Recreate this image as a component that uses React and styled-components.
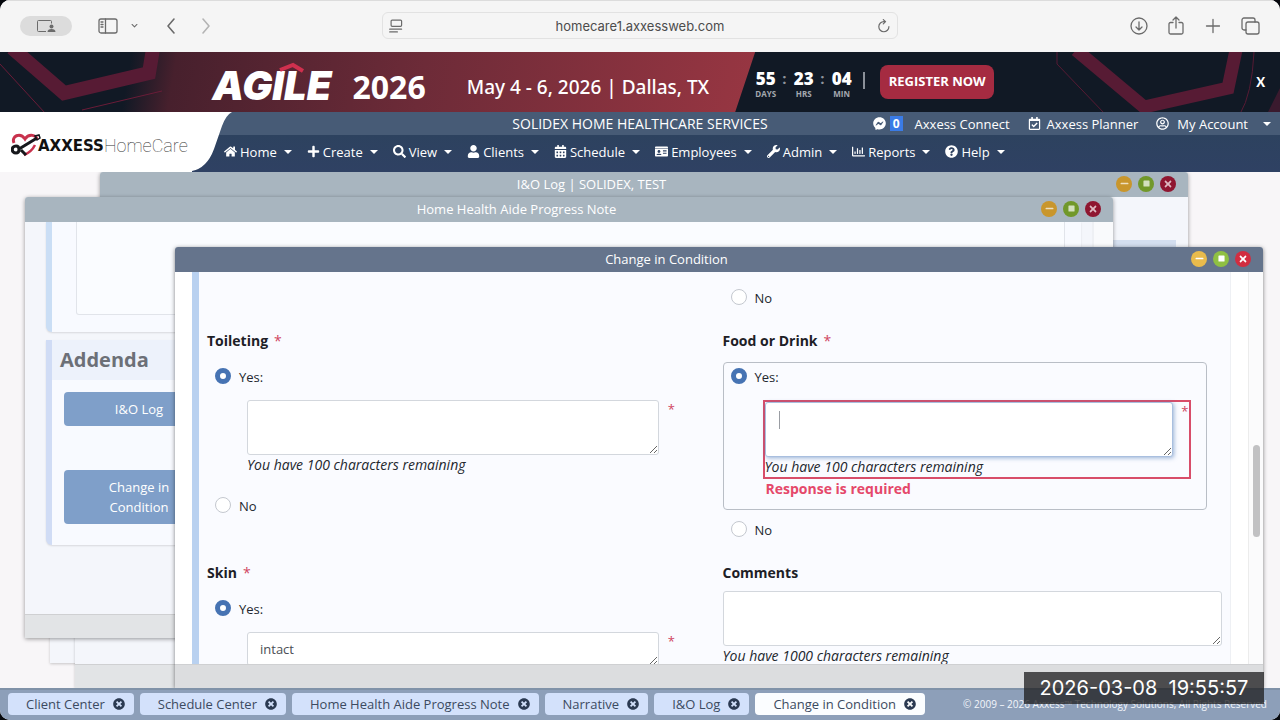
import React from "react";
import styled, { createGlobalStyle, css } from "styled-components";
import {
  FaHome, FaPlus, FaSearch, FaUser, FaCalendarAlt, FaIdCard, FaWrench,
  FaRegChartBar, FaQuestionCircle, FaFacebookMessenger, FaRegCalendarCheck,
  FaRegUserCircle, FaTimesCircle, FaTimes, FaMinus, FaSquare,
} from "react-icons/fa";

const GlobalStyle = createGlobalStyle`
  *, *::before, *::after { box-sizing: border-box; }
  body { margin: 0; background: #06080d; font-family: "Open Sans", "Noto Sans", sans-serif; font-size: 13px; line-height: 20px; color: #23272e; }
  button, input, textarea { font: inherit; margin: 0; }
  button { border: 0; padding: 0; background: none; color: inherit; cursor: pointer; }
  a { color: inherit; text-decoration: none; }
`;

const Page = styled.div`
  display: flex;
  flex-direction: column;
  height: 100vh;
  overflow: hidden;
  border-radius: 10px;
  background: #f8f6f8;
`;

/* Browser toolbar */

const BrowserBar = styled.header`
  flex: none;
  display: grid;
  grid-template-columns: minmax(0, 1fr) minmax(0, 516px) minmax(0, 1fr);
  align-items: center;
  height: 52px;
  padding: 0 20px 2px;
  background: #f5f5f5;
  border-top: 1px solid #dcdcdc;
  color: #6b6b6b;
`;

const ToolGroup = styled.div`
  display: flex;
  align-items: center;
  justify-content: ${(p) => (p.$end ? "flex-end" : "flex-start")};
  gap: ${(p) => p.$gap}px;
`;

const ToolButton = styled.button`
  display: flex;
  color: ${(p) => (p.$faded ? "#b4b4b4" : "#6b6b6b")};
`;

const ProfilePill = styled.button`
  display: flex;
  align-items: center;
  justify-content: center;
  width: 52px;
  height: 20px;
  border-radius: 10px;
  background: #dcdcdc;
`;

const AddressBar = styled.div`
  display: flex;
  align-items: center;
  height: 27px;
  padding: 0 6px;
  border: 1px solid #e2e2e2;
  border-radius: 6px;
`;

const AddressInput = styled.input`
  flex: 1;
  min-width: 0;
  border: 0;
  background: none;
  text-align: center;
  font-family: Inter, sans-serif;
  font-size: 13px;
  color: #4c4c4c;
`;

/* Promotional banner */

const Banner = styled.aside`
  flex: none;
  position: relative;
  display: flex;
  align-items: center;
  height: 60px;
  background: #111925;
  color: #fff;
`;

const Ribbon = styled.div`
  position: relative;
  display: flex;
  align-items: center;
  justify-content: flex-end;
  width: 59%;
  height: 100%;
  padding-right: 46px;
  background: linear-gradient(100deg, #111925 0, #111925 130px, #47202d 175px, #6d2b38 420px, #983642 100%);
  clip-path: polygon(0 0, 100% 0, calc(100% - 20px) 100%, 0 100%);
`;

const BannerArt = styled.svg`
  position: absolute;
  top: 0;
  ${(p) => p.$side}: 0;
`;

const AgileMark = styled.div`
  position: relative;
  margin: 8px 21px 0 0;
  font-family: Inter, sans-serif;
  font-weight: 900;
  font-style: italic;
  font-size: 40px;
  line-height: 44px;
`;

const Roof = styled.svg`
  position: absolute;
  left: 66px;
  top: -3px;
`;

const Year = styled.strong`
  margin: 10px 41px 0 0;
  font-size: 32px;
  line-height: 40px;
  font-weight: 700;
`;

const EventDate = styled.span`
  margin-top: 10px;
  font-family: "Noto Sans", "Open Sans", sans-serif;
  font-size: 19px;
  font-weight: 500;
  line-height: 24px;
  white-space: nowrap;
`;

const Countdown = styled.div`
  display: flex;
  align-items: flex-start;
  gap: 6px;
  margin-top: 4px;
`;

const Unit = styled.div`
  width: 21px;
  text-align: center;
  font-size: 8px;
  line-height: 10px;
  font-weight: 700;
  color: #a4a8af;
`;

const UnitValue = styled.strong`
  display: block;
  font-size: 17px;
  line-height: 20px;
  color: #fff;
`;

const Colon = styled.span`
  width: 5px;
  font-size: 15px;
  font-weight: 700;
  line-height: 18px;
  color: #8f949c;
`;

const Divider = styled.span`
  width: 2px;
  height: 17px;
  margin: 0 15px 4px 11px;
  background: #8b9099;
`;

const RegisterButton = styled.button`
  height: 34px;
  width: 114px;
  padding-bottom: 2px;
  border-radius: 8px;
  background: #a52b41;
  font-size: 13px;
  font-weight: 700;
  color: #fff;
`;

const BannerClose = styled.button`
  position: relative;
  margin: 0 15px 0 auto;
  font-family: Lato, sans-serif;
  font-size: 13px;
  font-weight: 900;
`;

/* Application header */

const AppHeader = styled.header`
  flex: none;
  position: relative;
  color: #fff;
`;

const AgencyStrip = styled.div`
  display: grid;
  grid-template-columns: 1fr auto 1fr;
  align-items: center;
  height: 23px;
  padding: 0 9px;
  background: #475b76;
`;

const AgencyName = styled.span`
  grid-column: 2;
  font-size: 14px;
`;

const AccountLinks = styled.div`
  display: flex;
  align-items: center;
  justify-content: flex-end;
  gap: 18px;
`;

const AccountLink = styled.a`
  display: flex;
  align-items: center;
  gap: ${(p) => p.$gap || 6}px;
  white-space: nowrap;
`;

const CountBadge = styled.span`
  margin: 0 6px 0 -2px;
  padding: 0 3px;
  line-height: 15px;
  background: #3a7be6;
  font-size: 12px;
  font-weight: 700;
`;

const Caret = styled.span`
  border: 4px solid transparent;
  border-top-color: currentColor;
  border-bottom: 0;
  margin-left: ${(p) => p.$space}px;
`;

const MainNav = styled.nav`
  display: flex;
  align-items: center;
  gap: 15px;
  height: 37px;
  padding: 0 16px 4px 224px;
  background: linear-gradient(#2d425f, #2f4163);
`;

const NavLink = styled.a`
  display: flex;
  align-items: center;
  gap: 3px;
  white-space: nowrap;
  svg { height: 13px; width: auto; }
`;

const LogoPanel = styled.a`
  position: absolute;
  left: 0;
  top: 0;
  display: flex;
  height: 60px;
  color: #111;
`;

const LogoFace = styled.span`
  display: flex;
  align-items: center;
  width: 192px;
  padding: 8px 0 0 11px;
  background: #fff;
`;

const LogoEdge = styled.svg`
  display: block;
`;

const LogoBold = styled.span`
  font-family: "DejaVu Sans", sans-serif;
  font-weight: 700;
  font-size: 15px;
  line-height: 20px;
  margin-left: -5px;
`;

const LogoLight = styled.span`
  font-family: Roboto, sans-serif;
  font-weight: 100;
  font-size: 18px;
  line-height: 20px;
  color: #333;
`;

/* Desktop with floating windows */

const Desktop = styled.main`
  flex: 1;
  min-height: 0;
  position: relative;
  overflow: hidden;
`;

const WindowFrame = styled.section`
  position: absolute;
  left: ${(p) => p.$x}px;
  top: ${(p) => p.$y}px;
  width: 85%;
  height: 441px;
  display: flex;
  flex-direction: column;
  background: ${(p) => (p.$active ? "#fff" : "#f4f6fb")};
  box-shadow: 0 1px 4px ${(p) => (p.$active ? "rgba(0,0,0,.5)" : "rgba(0,0,0,.4)")};
  border-radius: 3px 3px 0 0;
  ${(p) => p.$faint && css`box-shadow: 0 1px 3px rgba(0,0,0,.2);`}
`;

const TitleBar = styled.div`
  flex: none;
  display: flex;
  align-items: center;
  height: 25px;
  padding-bottom: 2px;
  border-radius: 3px 3px 0 0;
  background: ${(p) => (p.$active ? "#65748c" : "#a8b5bf")};
`;

const WindowTitle = styled.h2`
  flex: 1;
  margin: 0;
  text-align: center;
  font-size: 13px;
  line-height: 20px;
  font-weight: 400;
  color: #fff;
`;

const WindowControls = styled.div`
  display: flex;
  justify-content: flex-end;
  gap: 6px;
  width: 105px;
  padding-right: 12px;
`;

const ControlDot = styled.button`
  display: flex;
  align-items: center;
  justify-content: center;
  width: 16px;
  height: 16px;
  border-radius: 50%;
  background: ${(p) => p.$color};
  color: ${(p) => (p.$dim ? "rgba(255,255,255,.7)" : "#fff")};
`;

const WindowBody = styled.div`
  flex: 1;
  min-height: 0;
  display: flex;
  overflow: hidden;
`;

const WindowFooter = styled.div`
  flex: none;
  height: 24px;
  border-top: 1px solid #cfd0d2;
  background: ${(p) => (p.$active ? "#dcdddf" : "#e2e4e6")};
`;

const FormArea = styled.div`
  flex: 1;
  min-width: 0;
  padding: 0 17px;
`;

const FormSection = styled.div`
  display: grid;
  grid-template-columns: repeat(2, minmax(0, 1fr));
  row-gap: 23px;
  min-height: 100%;
  padding-top: 16px;
  border-left: 7px solid #b9d1f0;
  border-right: 1px solid #eef0f4;
  background: #fafbff;
`;

const ScrollTrack = styled.div`
  width: 15px;
  padding: 173px 3px 0 4px;
  border-left: 1px solid #ececec;
  background: #fbfbfc;
`;

const ScrollThumb = styled.div`
  height: 92px;
  border-radius: 4px;
  background: #c1c1c3;
`;

const Question = styled.div`
  padding: 0 8px;
`;

const QuestionTitle = styled.h3`
  margin: 0 0 ${(p) => (p.$tight ? 8 : 11)}px;
  font-size: 14px;
  line-height: 20px;
  font-weight: 700;
  color: #1d2026;
`;

const RequiredMark = styled.span`
  margin-left: 6px;
  font-weight: 400;
  color: #d0455f;
`;

const OptionBox = styled.div`
  width: 484px;
  max-width: 100%;
  margin-bottom: 10px;
  padding: 4px 15px 10px 39px;
  border: 1px solid ${(p) => (p.$outlined ? "#b9bec6" : "transparent")};
  border-radius: 4px;
`;

const OptionLabel = styled.label`
  display: flex;
  align-items: center;
  gap: 8px;
  margin-left: ${(p) => (p.$inBox ? -32 : 8)}px;
`;

const Radio = styled.input.attrs({ type: "radio" })`
  appearance: none;
  width: 16px;
  height: 16px;
  margin-bottom: 2px;
  border: 1px solid #c4c8cf;
  border-radius: 50%;
  background: #fff;
  &:checked { border: 5px solid #4673b3; }
`;

const DetailArea = styled.div`
  margin-top: 13px;
  ${(p) => p.$invalid && css`border: 2px solid #d84d69;`}
`;

const DetailRow = styled.div`
  display: flex;
  span { width: 16px; margin: 0; text-align: right; line-height: 18px; }
`;

const TextBox = styled.textarea`
  display: block;
  flex: 1;
  width: 100%;
  min-width: 0;
  height: ${(p) => (p.$short ? 34 : 55)}px;
  padding: 6px 12px;
  border: 1px solid #d3d7dd;
  border-radius: 3px;
  outline: 0;
  background: #fff;
  color: #4a4e55;
  overflow: hidden;
  ${(p) => p.$focused && css`
    border-color: #a9bfdf;
    background: linear-gradient(#9a9da3, #9a9da3) 13px 8px / 1px 18px no-repeat #fff;
    box-shadow: 1px 1px 4px rgba(70, 115, 179, .55);
  `}
`;

const Remaining = styled.em`
  display: block;
  font-size: 14px;
  color: #23272e;
`;

const ErrorText = styled.strong`
  display: block;
  margin-left: 3px;
  font-size: 14px;
  color: #e5486a;
`;

/* Progress note window content */

const NoteArea = styled.div`
  flex: 1;
  min-width: 0;
  padding: 0 11px 0 21px;
`;

const NoteCard = styled.div`
  padding: ${(p) => (p.$plain ? "0 16px 17px 24px" : 0)};
  margin-bottom: 8px;
  border-left: 6px solid ${(p) => (p.$plain ? "#cadef5" : "#d0dcf5")};
  background: #f8faff;
  box-shadow: 0 1px 2px rgba(0, 0, 0, .12);
  border-radius: 0 0 0 6px;
`;

const NoteBox = styled.div`
  height: 93px;
  border: 1px solid #e1e4ea;
  border-top: 0;
  border-radius: 0 0 3px 3px;
  background: #fafcff;
`;

const NoteHeading = styled.h3`
  margin: 0;
  padding: 6px 8px;
  background: #edf2fb;
  font-size: 20px;
  line-height: 28px;
  font-weight: 700;
  color: #6c7077;
`;

const NoteActions = styled.div`
  display: flex;
  flex-direction: column;
  gap: 44px;
  padding: 12px 12px 21px;
`;

const NoteButton = styled.button`
  width: 150px;
  padding: 7px 36px;
  border-radius: 4px;
  background: #7f9fc9;
  color: #fff;
`;

const NoteScroll = styled.div`
  width: 21px;
  border-left: 2px solid #eef0f4;
  background: #f9fafc;
`;

const LogArea = styled.div`
  flex: 1;
  margin: 43px 12px 0;
  height: 40px;
  background: #d3deef;
`;

/* Task bar */

const TaskBar = styled.footer`
  flex: none;
  position: relative;
  display: flex;
  align-items: center;
  gap: 6px;
  height: 32px;
  padding: 0 13px 2px 8px;
  background: #8d9fb9;
  border-top: 2px solid #8092a8;
`;

const TaskTab = styled.div`
  display: flex;
  align-items: center;
  gap: 8px;
  height: 22px;
  padding: 0 9px 0 18px;
  border-radius: 4px;
  white-space: nowrap;
  background: ${(p) => (p.$active ? "#fbfdff" : "#d3e1fb")};
  color: #3c4a60;
`;

const TabClose = styled.button`
  display: flex;
  color: #2b3a52;
`;

const Copyright = styled.small`
  margin-left: auto;
  font-size: 10px;
  line-height: 12px;
  font-weight: 500;
  color: #f3f6fb;
  white-space: nowrap;
`;

const Timestamp = styled.time`
  position: absolute;
  right: 16px;
  bottom: 16px;
  width: 240px;
  text-align: center;
  background: rgba(30, 30, 32, .76);
  font-family: Inter, sans-serif;
  font-size: 20px;
  line-height: 32px;
  color: #fff;
  white-space: pre;
`;

const navItems = [
  ["Home", FaHome], ["Create", FaPlus], ["View", FaSearch], ["Clients", FaUser],
  ["Schedule", FaCalendarAlt], ["Employees", FaIdCard], ["Admin", FaWrench],
  ["Reports", FaRegChartBar], ["Help", FaQuestionCircle],
];

const tabs = ["Client Center", "Schedule Center", "Home Health Aide Progress Note", "Narrative", "I&O Log", "Change in Condition"];

function LineIcon({ size = 20, width = 1.3, children }) {
  return (
    <svg width={size} height={size} viewBox="0 0 20 20" fill="none" stroke="currentColor" strokeWidth={width} strokeLinecap="round" strokeLinejoin="round" aria-hidden="true">
      {children}
    </svg>
  );
}

function BrowserToolbar() {
  return (
    <BrowserBar>
      <ToolGroup $gap={26}>
        <ProfilePill aria-label="Profile">
          <svg width="20" height="14" viewBox="0 0 20 14" fill="none" stroke="#6b6b6b" aria-hidden="true">
            <path d="M10 12.500H2.500a1 1 0 0 1-1-1v-9a1 1 0 0 1 1-1h12a1 1 0 0 1 1 1v2" />
            <circle cx="15.500" cy="7.500" r="2" fill="#6b6b6b" stroke="none" />
            <path d="M11.500 13c0-2 1.500-3 4-3s4 1 4 3z" fill="#6b6b6b" stroke="none" />
          </svg>
        </ProfilePill>
        <ToolGroup $gap={13}>
          <ToolButton aria-label="Show sidebar">
            <LineIcon><rect x="1" y="3" width="18" height="14" rx="2" /><path d="M7.500 3v14M3 6h2M3 8.500h2M3 11h2" /></LineIcon>
          </ToolButton>
          <ToolButton aria-label="Tab groups"><LineIcon size={7} width={3}><path d="m3 7 7 7 7-7" /></LineIcon></ToolButton>
        </ToolGroup>
        <ToolGroup $gap={15}>
          <ToolButton aria-label="Back"><LineIcon width={1.6}><path d="m10 3-6 7 6 7" /></LineIcon></ToolButton>
          <ToolButton aria-label="Forward" $faded><LineIcon width={1.6}><path d="m4 3 6 7-6 7" /></LineIcon></ToolButton>
        </ToolGroup>
      </ToolGroup>
      <AddressBar>
        <ToolButton aria-label="Reader"><LineIcon size={14} width={1.7}><rect x="3" y="1.500" width="15" height="9" rx="1.500" /><path d="M1 14.500h17M1 18.500h11" /></LineIcon></ToolButton>
        <AddressInput aria-label="Address" defaultValue="homecare1.axxessweb.com" />
        <ToolButton aria-label="Reload"><LineIcon size={14} width={1.7}><path d="M17 11a7.200 7.200 0 1 1-7-7.200h2M9 .8l3.200 3L9 7" /></LineIcon></ToolButton>
      </AddressBar>
      <ToolGroup $end $gap={17}>
        <ToolButton aria-label="Downloads"><LineIcon><circle cx="10" cy="10" r="8" /><path d="M10 6v8M7 11l3 3 3-3" /></LineIcon></ToolButton>
        <ToolButton aria-label="Share"><LineIcon><path d="M7 6.500H4.500a1.500 1.500 0 0 0-1.500 1.500v8.500a1.500 1.500 0 0 0 1.500 1.500h11a1.500 1.500 0 0 0 1.500-1.500V8a1.500 1.500 0 0 0-1.500-1.500H13M10 12V1M7 4l3-3 3 3" /></LineIcon></ToolButton>
        <ToolButton aria-label="New tab"><LineIcon><path d="M10 3.500v13M3.500 10h13" /></LineIcon></ToolButton>
        <ToolButton aria-label="All tabs"><LineIcon><rect x="6" y="6" width="13" height="12" rx="2" /><path d="M6 14H4a2 2 0 0 1-2-2V4a2 2 0 0 1 2-2h9a2 2 0 0 1 2 2v2" /></LineIcon></ToolButton>
      </ToolGroup>
    </BrowserBar>
  );
}

function EventBanner() {
  return (
    <Banner>
      <BannerArt $side="right" width="226" height="60" viewBox="0 0 226 60" fill="none" aria-hidden="true">
        <path d="M22-2 90 55 174 36 182-2" stroke="#571b34" strokeWidth="13" />
        <path d="M3 0v12l48 50M186 62q12-20 14-62" stroke="#571b34" strokeWidth="1" />
        <path d="m214 60 12-24v24z" fill="#3a1a2e" />
      </BannerArt>
      <Ribbon>
        <BannerArt $side="left" width="200" height="60" viewBox="0 0 200 60" fill="none" aria-hidden="true">
          <path d="M12-4 64 41 149 21 153-3" stroke="#571b34" strokeWidth="14" />
          <path d="M0 12 45 61M82 58l80-19" stroke="#6a1c38" strokeWidth="1" />
        </BannerArt>
        <AgileMark>
          AGILE
          <Roof width="28" height="12" viewBox="0 0 28 12" aria-hidden="true">
            <path d="M2 9 15 4 25 10" fill="none" stroke="#cf304e" strokeWidth="4" />
          </Roof>
        </AgileMark>
        <Year>2026</Year>
        <EventDate>May 4 - 6, 2026 | Dallas, TX</EventDate>
      </Ribbon>
      <Countdown>
        <Unit><UnitValue>55</UnitValue>DAYS</Unit>
        <Colon>:</Colon>
        <Unit><UnitValue>23</UnitValue>HRS</Unit>
        <Colon>:</Colon>
        <Unit><UnitValue>04</UnitValue>MIN</Unit>
      </Countdown>
      <Divider />
      <RegisterButton>REGISTER NOW</RegisterButton>
      <BannerClose aria-label="Close banner">X</BannerClose>
    </Banner>
  );
}

function Header() {
  return (
    <AppHeader>
      <AgencyStrip>
        <AgencyName>SOLIDEX HOME HEALTHCARE SERVICES</AgencyName>
        <AccountLinks>
          <AccountLink href="#connect"><FaFacebookMessenger size={13} /><CountBadge>0</CountBadge>Axxess Connect</AccountLink>
          <AccountLink href="#planner"><FaRegCalendarCheck size={13} />Axxess Planner</AccountLink>
          <AccountLink href="#account" $gap={8}><FaRegUserCircle size={13} />My Account<Caret $space={7} /></AccountLink>
        </AccountLinks>
      </AgencyStrip>
      <MainNav>
        {navItems.map(([label, Icon]) => (
          <NavLink href={`#${label.toLowerCase()}`} key={label}><Icon />{label}<Caret $space={4} /></NavLink>
        ))}
      </MainNav>
      <LogoPanel href="#top">
        <LogoFace>
          <svg width="32" height="26" viewBox="0 0 32 26" fill="none" aria-hidden="true">
            <path d="M3 10C0 3 9-1 14 6c4-6 12-4 12 1" stroke="#c8324d" strokeWidth="3" />
            <path d="M13 22c5-2 9-6 11-10" stroke="#c8324d" strokeWidth="2.500" />
            <path d="M8 16 26 5M5 13c-5 0-5 7 0 7 4 0 4-7 0-7M10 17l5 5" stroke="#16181c" strokeWidth="3" />
            <path d="m24 3 4-1 1 3-3 2z" stroke="#16181c" strokeWidth="1.500" />
          </svg>
          <LogoBold>AXXESS</LogoBold>
          <LogoLight>HomeCare</LogoLight>
        </LogoFace>
        <LogoEdge width="40" height="60" viewBox="0 0 40 60" aria-hidden="true">
          <path d="M0 0H40Q34 3 30 14L22 37Q15 56 0 59z" fill="#fff" />
        </LogoEdge>
      </LogoPanel>
    </AppHeader>
  );
}

function AppWindow({ x, y, title, active, faint, bare, children }) {
  return (
    <WindowFrame $x={x} $y={y} $active={active} $faint={faint} aria-label={title}>
      <TitleBar $active={active}>
        <WindowTitle>{title}</WindowTitle>
        <WindowControls>
          <ControlDot aria-label="Minimize" $color={active ? "#e9bb4c" : "#c9962c"} $dim={!active}><FaMinus size={9} /></ControlDot>
          <ControlDot aria-label="Maximize" $color={active ? "#8fc043" : "#71982a"} $dim={!active}><FaSquare size={7} /></ControlDot>
          <ControlDot aria-label="Close" $color={active ? "#d22d40" : "#8f1630"} $dim={!active}><FaTimes size={10} /></ControlDot>
        </WindowControls>
      </TitleBar>
      <WindowBody>{children}</WindowBody>
      {!bare && <WindowFooter $active={active} />}
    </WindowFrame>
  );
}

function YesDetail({ name, label, value, invalid, short }) {
  return (
    <OptionBox $outlined={invalid}>
      <OptionLabel $inBox><Radio name={name} defaultChecked />Yes:</OptionLabel>
      <DetailArea $invalid={invalid}>
        <DetailRow>
          <TextBox aria-label={`${label} details`} defaultValue={value} $focused={invalid} $short={short} />
          <RequiredMark>*</RequiredMark>
        </DetailRow>
        {!short && <Remaining>You have 100 characters remaining</Remaining>}
      </DetailArea>
      {invalid && <ErrorText>Response is required</ErrorText>}
    </OptionBox>
  );
}

function ConditionForm() {
  return (
    <>
      <FormArea>
        <FormSection>
          <Question />
          <Question><OptionLabel><Radio name="previous" />No</OptionLabel></Question>
          <Question role="group" aria-label="Toileting">
            <QuestionTitle>Toileting<RequiredMark>*</RequiredMark></QuestionTitle>
            <YesDetail name="toileting" label="Toileting" />
            <OptionLabel><Radio name="toileting" />No</OptionLabel>
          </Question>
          <Question role="group" aria-label="Food or Drink">
            <QuestionTitle>Food or Drink<RequiredMark>*</RequiredMark></QuestionTitle>
            <YesDetail name="food" label="Food or Drink" invalid />
            <OptionLabel><Radio name="food" />No</OptionLabel>
          </Question>
          <Question role="group" aria-label="Skin">
            <QuestionTitle>Skin<RequiredMark>*</RequiredMark></QuestionTitle>
            <YesDetail name="skin" label="Skin" value="intact" short />
          </Question>
          <Question>
            <QuestionTitle $tight><label htmlFor="comments">Comments</label></QuestionTitle>
            <TextBox id="comments" />
            <Remaining>You have 1000 characters remaining</Remaining>
          </Question>
        </FormSection>
      </FormArea>
      <ScrollTrack><ScrollThumb /></ScrollTrack>
    </>
  );
}

function ProgressNote() {
  return (
    <>
      <NoteArea>
        <NoteCard $plain><NoteBox /></NoteCard>
        <NoteCard>
          <NoteHeading>Addenda</NoteHeading>
          <NoteActions>
            <NoteButton>I&amp;O Log</NoteButton>
            <NoteButton>Change in Condition</NoteButton>
          </NoteActions>
        </NoteCard>
      </NoteArea>
      <NoteScroll />
    </>
  );
}

export default function App() {
  return (
    <>
      <GlobalStyle />
      <Page>
        <BrowserToolbar />
        <EventBanner />
        <Header />
        <Desktop>
          <AppWindow x={50} y={50} faint bare />
          <AppWindow x={75} y={75} faint />
          <AppWindow x={100} y={0} title="I&O Log | SOLIDEX, TEST"><LogArea /></AppWindow>
          <AppWindow x={25} y={25} title="Home Health Aide Progress Note"><ProgressNote /></AppWindow>
          <AppWindow x={175} y={75} title="Change in Condition" active><ConditionForm /></AppWindow>
        </Desktop>
        <TaskBar>
          {tabs.map((tab, i) => (
            <TaskTab key={tab} $active={i === tabs.length - 1}>
              {tab}
              <TabClose aria-label={`Close ${tab}`}><FaTimesCircle size={12} /></TabClose>
            </TaskTab>
          ))}
          <Copyright>© 2009 – 2026 Axxess™ Technology Solutions, All Rights Reserved</Copyright>
          <Timestamp>{"2026-03-08  19:55:57"}</Timestamp>
        </TaskBar>
      </Page>
    </>
  );
}
